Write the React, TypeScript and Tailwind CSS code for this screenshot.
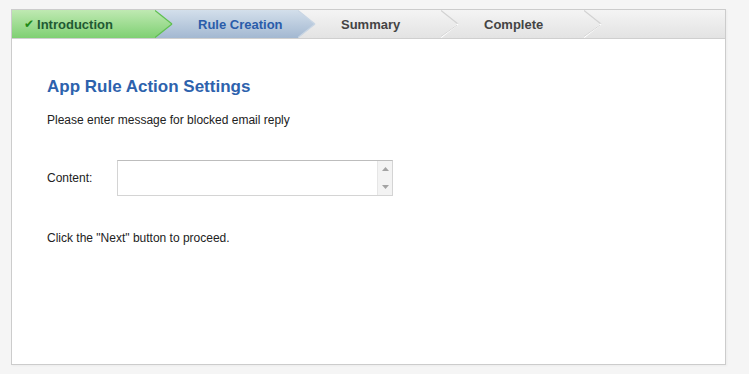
import React from "react";

const steps = [
  { label: "Introduction", state: "done" },
  { label: "Rule Creation", state: "current" },
  { label: "Summary", state: "todo" },
  { label: "Complete", state: "todo" },
];

const fills: Record<string, { from: string; to: string; edge: string; text: string }> = {
  done: { from: "#bfe9b2", to: "#7fd073", edge: "#5fbf50", text: "#1f5a33" },
  current: { from: "#d3dfeb", to: "#a3b8d1", edge: "#c9d6e4", text: "#2a5caa" },
  todo: { from: "#f4f4f4", to: "#e3e3e3", edge: "#d2d2d2", text: "#444444" },
};

function Arrow({ state, id }: { state: string; id: string }) {
  const c = fills[state];
  return (
    <svg
      className="absolute left-full top-0"
      width="18"
      height="28"
      viewBox="0 0 18 28"
    >
      <defs>
        <linearGradient id={id} x1="0" y1="0" x2="0" y2="1">
          <stop offset="0" stopColor={c.from} />
          <stop offset="1" stopColor={c.to} />
        </linearGradient>
      </defs>
      <polygon points="0,0 17,14 0,28" fill={`url(#${id})`} />
      <polyline points="0,0.5 17,14" fill="none" stroke={c.edge} strokeWidth="1.2" />
      <polyline
        points="17,14 0,27.5"
        fill="none"
        stroke={state === "todo" ? "#ffffff" : c.edge}
        strokeWidth="1.2"
      />
      {state === "todo" && (
        <polyline points="16,15 0,26.5" fill="none" stroke="#d6d6d6" strokeWidth="1" />
      )}
    </svg>
  );
}

export default function App() {
  return (
    <div className="min-h-screen w-full bg-[#f5f5f5] pt-[9px] pl-[11px] font-['Liberation_Sans',Arial,sans-serif]">
      <div className="w-[715px] h-[356px] border border-[#cccccc] bg-white shadow-[1px_1px_2px_rgba(0,0,0,0.04)]">
        <div className="flex h-[29px] border-b border-[#cfcfcf] bg-gradient-to-b from-[#f4f4f4] to-[#e3e3e3]">
          {steps.map((s, i) => {
            const c = fills[s.state];
            return (
              <div
                key={s.label}
                className="relative w-[143px] h-[28px] flex items-center text-[13px] font-bold"
                style={{
                  background: `linear-gradient(to bottom, ${c.from}, ${c.to})`,
                  zIndex: 10 - i,
                  color: c.text,
                  paddingLeft: i === 0 ? 12 : 43,
                }}
              >
                {s.state === "done" && (
                  <span className="mr-[3px] text-[12px] text-[#1f8a18] font-['DejaVu_Sans',sans-serif]">
                    ✔
                  </span>
                )}
                <span className="leading-none">{s.label}</span>
                <Arrow state={s.state} id={`g${i}`} />
              </div>
            );
          })}
        </div>

        <div className="pl-[35px] pt-[38px] text-[12px] text-[#222222]">
          <h1 className="text-[17px] leading-[20px] font-bold text-[#2d62ad]">
            App Rule Action Settings
          </h1>
          <p className="mt-[15px] leading-[16px]">
            Please enter message for blocked email reply
          </p>
          <div className="mt-[32px] flex items-center">
            <label className="w-[70px] leading-[16px]">Content:</label>
            <div className="flex w-[276px] h-[36px] border border-[#d4d4d4] border-t-[#bdbdbd] bg-white">
              <textarea className="flex-1 resize-none outline-none px-1 text-[12px]" />
              <div className="w-[15px] h-full bg-[#f3f3f3] border-l border-[#e6e6e6] flex flex-col items-center justify-between py-[6px]">
                <svg width="7" height="4" viewBox="0 0 7 4">
                  <polygon points="0,4 3.5,0 7,4" fill="#a3a3a3" />
                </svg>
                <svg width="7" height="4" viewBox="0 0 7 4">
                  <polygon points="0,0 7,0 3.5,4" fill="#a3a3a3" />
                </svg>
              </div>
            </div>
          </div>
          <p className="mt-[34px] leading-[16px]">Click the "Next" button to proceed.</p>
        </div>
      </div>
    </div>
  );
}
